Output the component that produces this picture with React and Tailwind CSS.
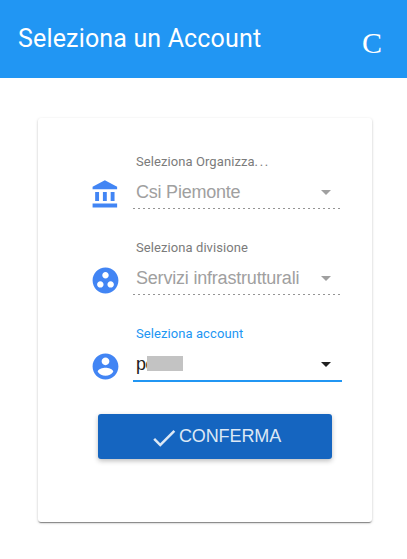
const icons = {
  bank: "M4 10v7h3v-7H4zm6 0v7h3v-7h-3zM2 22h19v-3H2v3zm14-12v7h3v-7h-3zm-4.5-9L2 6v2h19V6l-9.5-5z",
  group:
    "M12 2C6.48 2 2 6.48 2 12s4.48 10 10 10 10-4.48 10-10S17.52 2 12 2zM8 17.5c-1.38 0-2.5-1.12-2.5-2.5s1.12-2.5 2.5-2.5 2.5 1.12 2.5 2.5-1.12 2.5-2.5 2.5zM9.5 8c0-1.38 1.12-2.5 2.5-2.5s2.5 1.12 2.5 2.5-1.12 2.5-2.5 2.5S9.5 9.38 9.5 8zm6.5 9.5c-1.38 0-2.5-1.12-2.5-2.5s1.12-2.5 2.5-2.5 2.5 1.12 2.5 2.5-1.12 2.5-2.5 2.5z",
  account:
    "M12 2C6.48 2 2 6.48 2 12s4.48 10 10 10 10-4.48 10-10S17.52 2 12 2zm0 3c1.66 0 3 1.34 3 3s-1.34 3-3 3-3-1.34-3-3 1.34-3 3-3zm0 14.2c-2.5 0-4.71-1.28-6-3.22.03-1.99 4-3.08 6-3.08 1.99 0 5.97 1.09 6 3.08-1.29 1.94-3.5 3.22-6 3.22z",
  check: "M9 16.17L4.83 12l-1.42 1.41L9 19 21 7l-1.41-1.41z",
};

function Icon({ name, className }) {
  return (
    <svg viewBox="0 0 24 24" fill="currentColor" className={className}>
      <path d={icons[name]} />
    </svg>
  );
}

function Field({ icon, label, active, children }) {
  return (
    <div className="flex h-[86px]">
      <Icon name={icon} className="mt-7 h-[31px] w-[31px] shrink-0 text-[#4285f4]" />
      <div className={`ml-3 flex flex-col ${active ? "w-[209px]" : "w-[207px]"}`}>
        <div
          className={`mt-px h-5 pl-[3px] font-[Roboto,sans-serif] text-[13px] leading-5 tracking-[0.08px] whitespace-nowrap ${
            active ? "text-[#2196f3]" : "text-[#7b7b7b]"
          }`}
        >
          {label}
        </div>
        <div
          className={`mt-2 flex h-[25px] items-center pl-[3px] text-[18px] leading-[25px] ${
            active ? "text-[#212121]" : "text-[#a0a0a0]"
          }`}
        >
          {children}
          <svg
            viewBox="0 0 10 5"
            fill="currentColor"
            className={`ml-auto h-[5px] w-[10px] ${active ? "mr-[11px]" : "mr-[9px]"}`}
          >
            <path d="M0 0h10L5 5z" />
          </svg>
        </div>
        {active ? (
          <div className="mt-[3px] h-[2px] bg-[#2196f3]" />
        ) : (
          <div className="mt-[3px] h-px bg-[repeating-linear-gradient(90deg,#949494_0_2px,transparent_2px_5px)]" />
        )}
      </div>
    </div>
  );
}

export default function App() {
  return (
    <div className="h-[559px] w-[407px] overflow-hidden bg-white font-['Liberation_Sans',Arial,sans-serif]">
      <header className="flex h-[78px] items-center justify-between bg-[#2196f3] pr-[25px] pl-[18px] text-white">
        <h1 className="font-[Roboto,sans-serif] text-[25px] leading-8 tracking-[0.16px]">Seleziona un Account</h1>
        <span className="mt-2 font-['Liberation_Serif',serif] text-[30px] leading-8">C</span>
      </header>
      <main className="mt-10 ml-[38px] h-[404px] w-[334px] rounded-[3px] bg-white pt-[33px] pl-[52px] shadow-[0_1px_3px_rgba(0,0,0,0.2),0_1px_1px_rgba(0,0,0,0.14),0_2px_1px_-1px_rgba(0,0,0,0.3)]">
        <Field
          icon="bank"
          label={
            <>
              Seleziona Organizza<span className="tracking-[1.6px]">...</span>
            </>
          }
        >
          <span className="tracking-[-0.22px]">Csi Piemonte</span>
        </Field>
        <Field icon="group" label="Seleziona divisione">
          <span className="tracking-[-0.2px]">Servizi infrastrutturali</span>
        </Field>
        <Field icon="account" label="Seleziona account" active>
          <span className="relative w-[47px] tracking-[-0.6px]">
            pe
            <span className="absolute top-1 left-[11px] h-[15px] w-9 bg-[#c3c3c3]" />
          </span>
        </Field>
        <button className="mt-[5px] ml-2 flex h-[45px] w-[234px] items-center justify-center rounded-[3px] bg-[#1565c0] text-[18px] text-[#dce8f5] shadow-[0_2px_5px_rgba(0,0,0,0.26)]">
          <Icon name="check" className="mt-0.5 h-[30px] w-[30px]" />
          <span className="tracking-[-0.1px]">CONFERMA</span>
        </button>
      </main>
    </div>
  );
}
